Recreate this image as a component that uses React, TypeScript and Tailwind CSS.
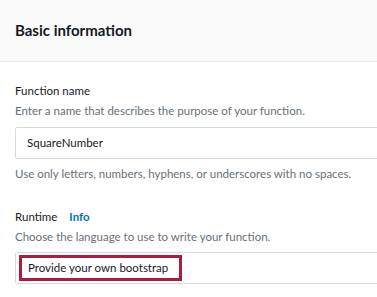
export default function App() {
  return (
    <div className="w-[377px] h-[297px] overflow-hidden bg-white font-['Lato',sans-serif] text-[#16191f]">
      {/* Header */}
      <div className="h-[62px] bg-[#fafafa] border-b border-[#eaeded] flex items-center px-[15px]">
        <h2 className="text-[15px] font-bold">Basic information</h2>
      </div>

      <div className="pl-[15px] pt-[20px] whitespace-nowrap text-[11.5px]">
        {/* Function name */}
        <p className="leading-[18px]">Function name</p>
        <p className="leading-[18px] text-[#687078] mt-[2px]">
          Enter a name that describes the purpose of your function.
        </p>
        <div className="mt-[7px] h-[32px] w-[380px] border border-[#d5dbdb] rounded-[2px] flex items-center pl-[11px]">
          SquareNumber
        </div>
        <p className="leading-[18px] text-[#687078] mt-[6px]">
          Use only letters, numbers, hyphens, or underscores with no spaces.
        </p>

        {/* Runtime */}
        <div className="mt-[25px] flex items-center gap-[12px] leading-[18px]">
          <span>Runtime</span>
          <span className="font-bold text-[#0073bb]">Info</span>
        </div>
        <p className="leading-[18px] text-[#687078] mt-[2px]">
          Choose the language to use to write your function.
        </p>
        <div className="mt-[6px] h-[32px] w-[380px] border border-[#d5dbdb] rounded-[2px] flex items-center pl-[3px]">
          <div className="h-[26px] w-[163px] border-[3px] border-[#a91e3c] flex items-center pl-[6px]">
            Provide your own bootstrap
          </div>
        </div>
      </div>
    </div>
  );
}
